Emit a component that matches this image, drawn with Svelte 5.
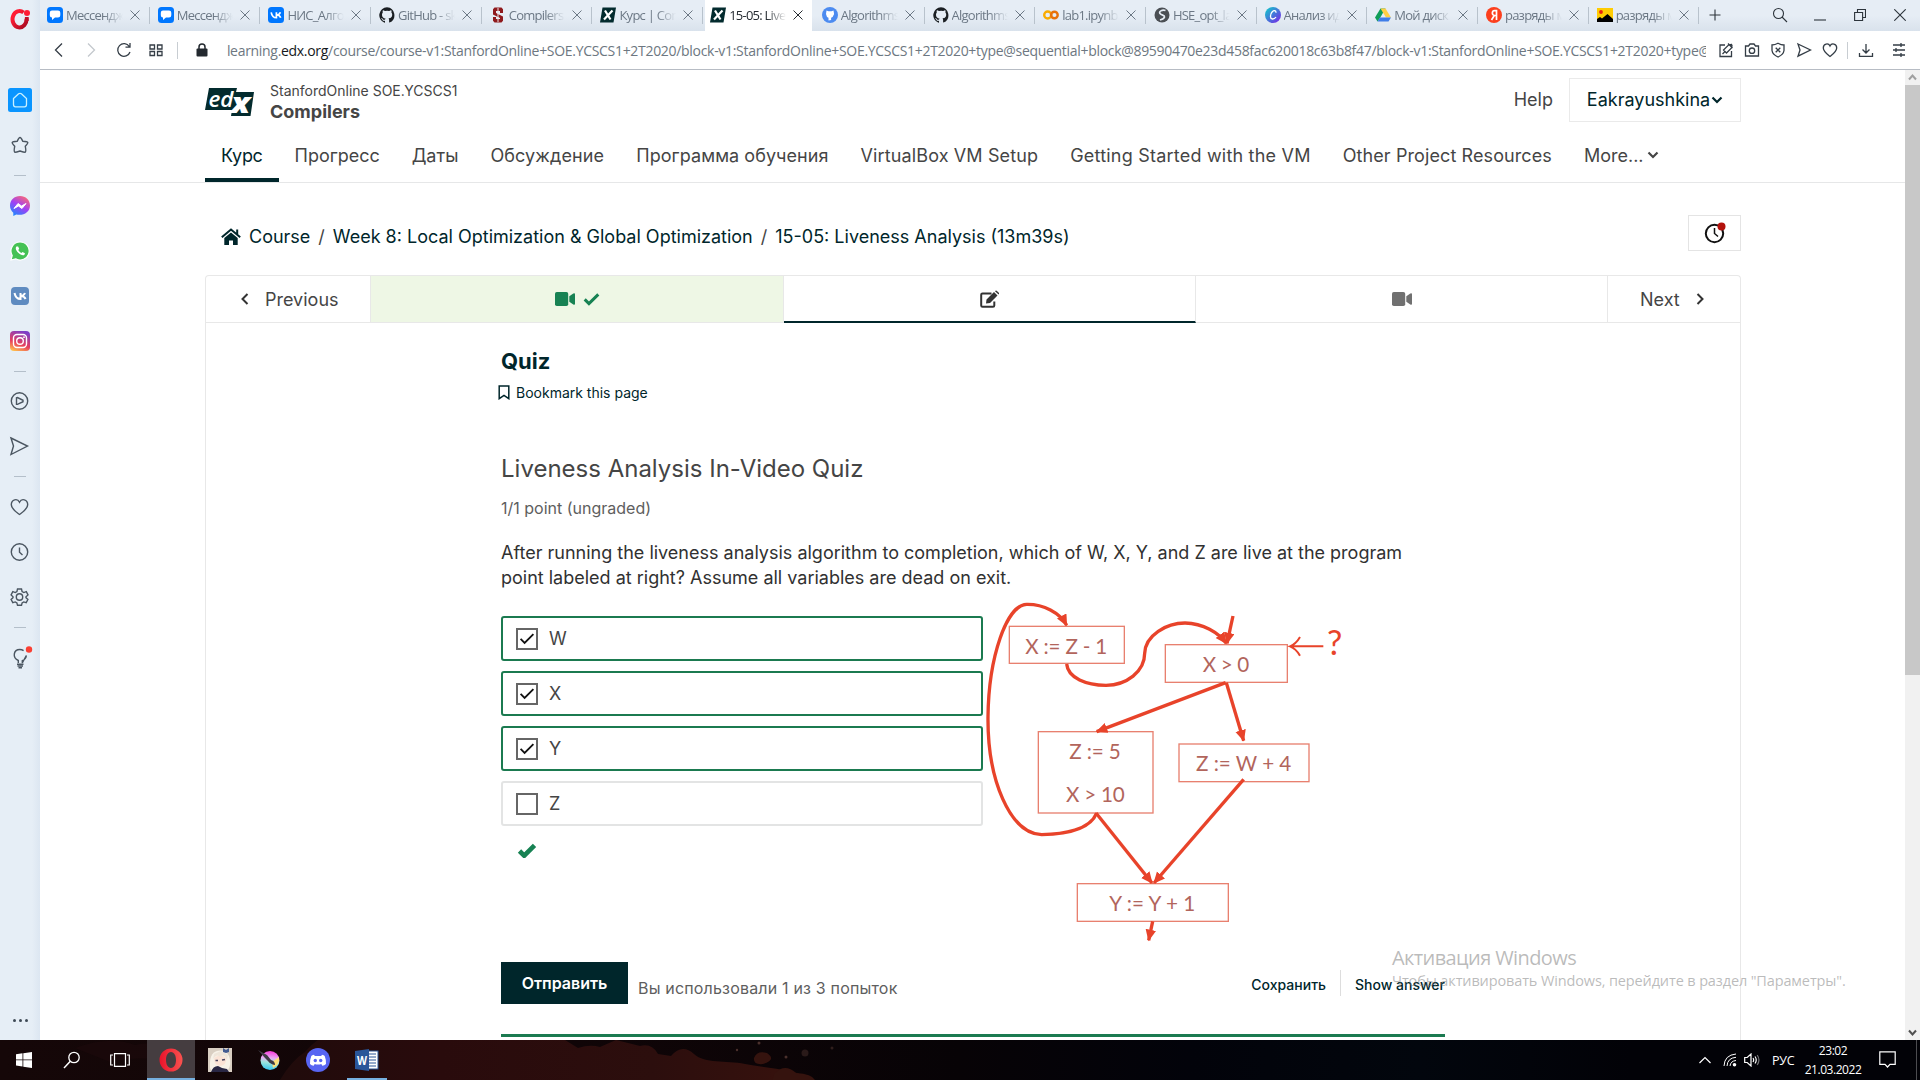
<script>
  const tabs = [
    { icon: 'chat', label: 'Мессенджер' },
    { icon: 'chat', label: 'Мессенджер' },
    { icon: 'vk', label: 'НИС_Алгоритмы' },
    { icon: 'github', label: 'GitHub - skr' },
    { icon: 'stanford', label: 'Compilers |' },
    { icon: 'edx', label: 'Курс | Compilers' },
    { icon: 'edx', label: '15-05: Liveness', active: true },
    { icon: 'bluegit', label: 'Algorithms' },
    { icon: 'github', label: 'Algorithms' },
    { icon: 'colab', label: 'lab1.ipynb -' },
    { icon: 'globe', label: 'HSE_opt_labs' },
    { icon: 'canva', label: 'Анализ идей' },
    { icon: 'drive', label: 'Мой диск –' },
    { icon: 'yandex', label: 'разряды мо' },
    { icon: 'picture', label: 'разряды мо' }
  ];
  const side = ['home', 'star', '-', 'messenger', 'whatsapp', 'vkside', 'instagram', '-', 'player', 'send', '-', 'heart', 'clock', 'gear', '-', 'bulb'];
  const nav = [
    { label: 'Курс', track: -0.3 },
    { label: 'Прогресс', track: -0.05 },
    { label: 'Даты', track: 0 },
    { label: 'Обсуждение', track: 0.12 },
    { label: 'Программа обучения', track: 0.06 },
    { label: 'VirtualBox VM Setup', track: 0.13 },
    { label: 'Getting Started with the VM', track: 0.21 },
    { label: 'Other Project Resources', track: 0.1 }
  ];
  let options = $state([
    { label: 'W', checked: true },
    { label: 'X', checked: true },
    { label: 'Y', checked: true },
    { label: 'Z', checked: false }
  ]);
</script>

{#snippet tabIcon(name)}
  <svg class="fav" viewBox="0 0 16 16">
    {#if name === 'chat'}
      <rect width="16" height="16" rx="3.5" fill="#07f" />
      <path d="M5 3.5h6a2.3 2.3 0 0 1 2.3 2.3v2.4A2.3 2.3 0 0 1 11 10.5H8l-3 2.4v-2.4A2.3 2.3 0 0 1 2.8 8.200V5.800A2.300 2.300 0 0 1 5 3.500z" fill="#fff" />
    {:else if name === 'vk'}
      <rect width="16" height="16" rx="3.500" fill="#07f" />
      <path d="M3.200 5.300C3.800 9 5.500 10.700 8.400 10.700V5.300M8.400 8C10.500 8 11.800 6.800 12.400 5.300M8.600 8C10.800 8 12.100 9.200 12.700 10.700" stroke="#fff" stroke-width="1.700" fill="none" />
    {:else if name === 'github'}
      <path d="M8 .2a8 8 0 0 0-2.500 15.500c.4.1.5-.2.5-.4v-1.500c-2.200.5-2.700-1-2.700-1-.4-.9-.9-1.200-.9-1.200-.7-.5.1-.5.1-.5.800.1 1.200.8 1.200.8.700 1.300 1.900.9 2.400.7.100-.5.300-.9.500-1.100-1.800-.2-3.600-.9-3.600-4 0-.9.300-1.600.8-2.100-.1-.2-.4-1 .1-2.100 0 0 .7-.2 2.200.8a7.500 7.500 0 0 1 4 0c1.500-1 2.200-.8 2.200-.8.400 1.100.2 1.900.1 2.100.5.600.8 1.300.8 2.100 0 3.100-1.900 3.700-3.700 3.900.300.300.6.800.6 1.500v2.200c0 .2.100.5.500.4A8 8 0 0 0 8 .2z" fill="#1b1f23" />
    {:else if name === 'stanford'}
      <path d="M4.500.5h7L13 2.300V6h-3V4H6v2l7 3.500v4.200l-1.500 1.800h-7L3 13.700V10h3v2h4v-1L3 7.500V2.300z" fill="#8f1a1d" />
      <path d="M8 1v14" stroke="#efe4e6" stroke-width="1" />
    {:else if name === 'edx'}
      <path d="M2.500.500H16L13.500 15.500H0z" fill="#032b2e" />
      <path d="M5 3.500l5.500 9M12.500 3.500L4 12.500" stroke="#fff" stroke-width="2.200" />
    {:else if name === 'bluegit'}
      <circle cx="8" cy="8" r="8" fill="#4c8bf0" />
      <path d="M4.500 3.500l2 .8h3l2-.8.600 3.500-1.500 3-1.500.7V13l-2.600.4V10.700l-1.500-.8L4 7z" fill="#fff" />
    {:else if name === 'colab'}
      <circle cx="4.700" cy="8" r="3.500" fill="none" stroke="#f9ab00" stroke-width="2.400" />
      <circle cx="11.400" cy="8" r="3.300" fill="none" stroke="#e8710a" stroke-width="2.400" />
    {:else if name === 'globe'}
      <circle cx="8" cy="8" r="7.500" fill="#4b4f54" />
      <path d="M11.500 3.500C8 2.500 4.500 4.500 6 6.500S11 8 10.500 10 7.500 12.500 6 13" fill="none" stroke="#e6edf5" stroke-width="1.700" />
    {:else if name === 'canva'}
      <defs><linearGradient id="cv" x1="0" y1="0" x2="1" y2="1"><stop offset=".1" stop-color="#15c0cc" /><stop offset=".9" stop-color="#7230e6" /></linearGradient></defs>
      <circle cx="8" cy="8" r="8" fill="url(#cv)" />
      <path d="M11 5.800C11.200 3.500 9 3 7.300 4.700 5 7 4.700 11.700 7.300 12c1.800.2 3-1 3.700-2" fill="none" stroke="#fff" stroke-width="1.300" />
    {:else if name === 'drive'}
      <path d="M5.500 1.500h5L5 11l-2.500 3.500L0 10.500z" fill="#0f9d58" />
      <path d="M5.500 1.500h5l5.500 9h-5z" fill="#ffcf44" />
      <path d="M5 10.500h11l-2.500 4h-11z" fill="#3f7de8" />
    {:else if name === 'yandex'}
      <circle cx="8" cy="8" r="8" fill="#fc3f1d" />
      <path d="M10.500 13V3.700H8.500C6 3.700 5.300 7.800 8.500 8.500h2M8.300 8.500L5.500 13" fill="none" stroke="#fff" stroke-width="1.700" />
    {:else}
      <rect y="1" width="16" height="14" fill="#ffcc02" />
      <path d="M0 15v-3l3-2 2 1.500L10.500 7l5.500 5v3z" fill="#000" />
      <circle cx="4" cy="5" r="1.900" fill="#e8220f" />
    {/if}
  </svg>
{/snippet}

{#snippet sideIcon(name)}
  <svg class="side-icon" viewBox="0 0 24 24">
    {#if name === 'home'}
      <rect width="24" height="24" rx="2.500" fill="#0a95ff" />
      <path d="M5.500 10.500L10.600 5.800Q12 4.800 13.400 5.800L18.500 10.500V16.500Q18.500 18.800 16.500 18.800H7.500Q5.500 18.800 5.500 16.500z" fill="none" stroke="#c9f1ff" stroke-width="1.300" />
    {:else if name === 'star'}
      <path d="M12 4.500Q13 4.500 14.800 8.300 19.300 8.600 19.800 9.500 20 10.300 17.300 13.300 18.300 18.500 17.200 19.200 16.400 19.400 12 18 7.600 19.400 6.800 19.200 5.700 18.500 6.700 13.300 4 10.300 4.200 9.500 4.700 8.600 9.200 8.300 11 4.500 12 4.500z" class="ln" />
    {:else if name === 'messenger'}
      <defs><linearGradient id="ms" x1=".2" y1="1" x2=".8" y2="0"><stop stop-color="#1a8cff" /><stop offset=".5" stop-color="#a040f5" /><stop offset="1" stop-color="#ff6b70" /></linearGradient></defs>
      <path d="M12 2C6.300 2 2 6 2 11.500c0 3 1.200 5.500 3.300 7.200V22l3-1.600c6.500 1.800 13.700-2 13.700-8.900C22 6 17.700 2 12 2z" fill="url(#ms)" />
      <path d="M6 14.500l4-5 3.500 2.500 4.500-2.500-4 5-3.500-2.500z" fill="#fff" stroke="#fff" />
    {:else if name === 'whatsapp'}
      <path d="M12 3a9 9 0 0 0-7.800 13.500L3 21l4.700-1.200A9 9 0 1 0 12 3z" fill="#45c254" stroke="#fff" stroke-width="1.200" />
      <path d="M8.500 7.500c-3 3 4 10 7.800 8.500l.7-1.800-2.500-1.200-1 1c-1.300-.5-2.600-1.800-3.200-3.100l.9-1.100L10.100 7.500z" fill="#fff" />
    {:else if name === 'vkside'}
      <rect x="3" y="3" width="18" height="18" rx="4" fill="#5f8bc0" />
      <path d="M6.500 9c.8 4 2.700 6 6 6V9M12.500 12c2.200 0 3.800-1.200 4.500-3M12.600 12c2.500 0 4.200 1.200 5 3" stroke="#fff" stroke-width="2" fill="none" />
    {:else if name === 'instagram'}
      <defs><linearGradient id="ig" x1=".2" y1="1" x2=".6" y2="0"><stop stop-color="#ffc14e" /><stop offset=".4" stop-color="#e8405c" /><stop offset="1" stop-color="#7d3fc8" /></linearGradient></defs>
      <rect x="2" y="2" width="20" height="20" rx="4" fill="url(#ig)" />
      <rect x="5.500" y="5.500" width="13" height="13" rx="3.500" fill="none" stroke="#fff" stroke-width="1.400" />
      <circle cx="12" cy="12" r="3.300" fill="none" stroke="#fff" stroke-width="1.400" /><circle cx="16" cy="8.200" r=".9" fill="#fff" />
    {:else if name === 'player'}
      <circle cx="11.500" cy="12" r="8.200" class="ln" /><path d="M8.500 8.800v6.500l1 .1 5.500-2.700v-1.400L9.500 8.600z" class="ln" />
    {:else if name === 'send'}
      <path d="M3 4l16.500 8L3 20.500 5.500 12z" class="ln" />
    {:else if name === 'heart'}
      <path d="M11.500 7.200C9.500 3 3.300 4.200 3.300 9.700c0 4.300 5 7.500 8.200 9.800 3.200-2.300 8.200-5.500 8.200-9.800 0-5.500-6.200-6.700-8.200-2.500z" class="ln" />
    {:else if name === 'clock'}
      <circle cx="11.500" cy="12" r="8.200" class="ln" /><path d="M11.500 7.500v4.800l3 2.700" class="ln" />
    {:else if name === 'gear'}
      <circle cx="11.500" cy="12" r="3.200" class="ln" />
      <path d="M9.500 4h4l.6 2.600 1.700 1 2.500-.9 1.700 3.200L18 11.800v.9l1.900 1.800-1.700 3.200-2.500-.8-1.600 1L13.500 20.300h-4l-.6-2.400-1.600-1-2.500.8L3.100 14.500 5 12.700v-.9L3.100 9.900l1.700-3.200 2.500.9 1.600-1z" class="ln" />
    {:else}
      <path d="M10.300 17v-2.500C4 11.500 5.500 3.500 11.800 3.500c1.500 0 2.500.3 3.800 1.200M18.300 9.500c0 2.500-1.500 4-4 5.200V17z" class="ln" />
      <path d="M9 18.200h6.500M9.500 20h5.500M10.500 21.800h3.500" class="ln" /><circle cx="21" cy="3.500" r="3.200" fill="#fa3f33" />
    {/if}
  </svg>
{/snippet}

{#snippet check(cls)}
  <svg class={cls} viewBox="0 0 20 16"><path d="M2 8.500l5 5L18 2.500" fill="none" stroke="currentColor" /></svg>
{/snippet}

{#snippet video()}
  <svg class="video" viewBox="0 0 20 14"><rect width="13.200" height="14" rx="1.800" fill="currentColor" /><path d="M14.300 4.300L18.300 1.500Q20 .8 20 2.300V11.700Q20 13.200 18.300 12.500L14.300 9.700z" fill="currentColor" /></svg>
{/snippet}

<div class="desktop">
  <div class="browser">
    <aside>
      <div class="opera-small">
        <svg width="24" height="24" viewBox="0 0 24 24"><defs><linearGradient id="op" x1="0" y1="0" x2="1" y2="1"><stop offset=".2" stop-color="#ff1d35" /><stop offset="1" stop-color="#a50a20" /></linearGradient></defs><path d="M15.500 4.500A7 8.200 0 1 0 18.500 10.500" fill="none" stroke="url(#op)" stroke-width="4" /><path d="M18.800 9v4" stroke="#c20f28" stroke-width="3.800" /><circle cx="19" cy="5" r="3" fill="#ff1d35" /></svg>
      </div>
      {#each side as item}
        {#if item === '-'}<div class="dash"><i></i></div>{:else}<div class="side-cell">{@render sideIcon(item)}</div>{/if}
      {/each}
      <div class="dots"><i></i><i></i><i></i></div>
    </aside>

    <div class="window">
      <div class="tabbar">
        {#each tabs as tab}
          <div class="tab" class:active={tab.active}>
            {@render tabIcon(tab.icon)}
            <span>{tab.label}</span>
            <svg class="x" viewBox="0 0 10 10"><path d="M.5.5l9 9M9.500.500l-9 9" /></svg>
          </div>
        {/each}
        <div class="controls">
          <svg class="plus" viewBox="0 0 12 12"><path d="M6 .5v11M.5 6h11" /></svg>
          <svg class="search" viewBox="0 0 16 16"><circle cx="6.500" cy="6.500" r="5" /><path d="M10 10l5 5" /></svg>
          <svg class="min" viewBox="0 0 12 12"><path d="M0 11h12" /></svg>
          <svg class="restore" viewBox="0 0 12 12"><path d="M.6 3.500h8v8h-8zM3.500 3.500v-3h8v8h-3" /></svg>
          <svg class="close" viewBox="0 0 12 12"><path d="M.3.300l11.400 11.400M11.700.300L.3 11.700" /></svg>
        </div>
      </div>

      <div class="address">
        <div class="nav-btns">
          <svg viewBox="0 0 16 16"><path d="M11 1.500L4.500 8l6.500 6.500" /></svg>
          <svg class="off" viewBox="0 0 16 16"><path d="M5 1.500L11.500 8 5 14.500" /></svg>
          <svg viewBox="0 0 16 16"><path d="M13.300 4.500A6.300 6.300 0 1 0 14 10M14 1v4.200h-4.500" /></svg>
          <svg viewBox="0 0 16 16"><path d="M2 3h4.500v4H2zM9.500 3H14v4H9.500zM2 9.500h4.500v4H2zM9.500 9.500H14v4H9.500z" /></svg>
        </div>
        <i class="vsep"></i>
        <svg class="lock" viewBox="0 0 12 14"><rect x=".5" y="5.500" width="11" height="8" rx="1" fill="#23292f" /><path d="M3 6V4a3 3 0 0 1 6 0v2" fill="none" stroke="#23292f" stroke-width="1.500" /></svg>
        <div class="url">learning.<b>edx.org</b>/course/course-v1:StanfordOnline+SOE.YCSCS1+2T2020/block-v1:StanfordOnline+SOE.YCSCS1+2T2020+type@sequential+block@89590470e23d458fac620018c63b8f47/block-v1:StanfordOnline+SOE.YCSCS1+2T2020+type@vertical</div>
        <div class="addr-icons">
          <svg viewBox="0 0 16 16"><path d="M7 3H2v11.500h11.500V9M13.500 2.500l-3 .5-5 5 3 3 5-5 .5-2.500zM10 1.500l4.500 4.500M4.500 12l2.500-2.500" /></svg>
          <svg viewBox="0 0 16 16"><path d="M1.500 4H4.500l1.500-2h4l1.500 2h3v10h-13z" /><circle cx="8" cy="8.700" r="2.700" /></svg>
          <svg viewBox="0 0 16 16"><path d="M8 1.300Q11 3 14 3V8.500Q13.500 12.500 8 15 2.500 12.500 2 8.500V3Q5 3 8 1.300zM5.700 5.700l4.600 4.600M10.300 5.700l-4.600 4.600" /></svg>
          <svg viewBox="0 0 16 16"><path d="M2 2l12.500 6L2 14.200 4 8z" /></svg>
          <svg viewBox="0 0 16 16"><path d="M8 4C6.500.7 1.300 1.500 1.300 6c0 3.500 4.200 6.500 6.700 8.500 2.500-2 6.700-5 6.700-8.500C14.700 1.500 9.500.7 8 4z" /></svg>
          <i class="vsep"></i>
          <svg class="dl" viewBox="0 0 16 16"><path d="M8 2v8.500M4.500 7.500L8 11l3.500-3.500M1.500 11v3.300h13V11" /></svg>
          <svg class="menu" viewBox="0 0 16 16"><path d="M2 3h12M2 8h12M2 13h12M10 1v4M5 6v4M10 11v4" /></svg>
        </div>
      </div>

      <div class="viewport">
        <div class="page">
          <header>
            <div class="brand-row">
              <svg class="logo" viewBox="0 0 49 28">
                <path d="M4 0H32L31 4H49L45.500 28H26L27 22H0z" fill="#032b2e" />
                <text x="3.500" y="18.500" class="lg" textLength="25" lengthAdjust="spacingAndGlyphs">ed</text>
                <text x="26" y="25" class="lg big" textLength="19" lengthAdjust="spacingAndGlyphs">x</text>
              </svg>
              <div class="course"><div class="org">StanfordOnline SOE.YCSCS1</div><div class="name">Compilers</div></div>
              <a class="help">Help</a>
              <button class="user">Eakrayushkina<svg class="caret" viewBox="0 0 12 8"><path d="M1.500 1.500L6 6l4.500-4.500" /></svg></button>
            </div>
            <nav>
              {#each nav as item, i}<a class:current={i === 0} style:letter-spacing="{item.track}px">{item.label}</a>{/each}
              <a class="more">More...<svg class="caret" viewBox="0 0 12 8"><path d="M1.500 1.500L6 6l4.500-4.500" /></svg></a>
            </nav>
          </header>

          <div class="crumb-row">
            <svg class="house" viewBox="0 0 20 17"><path d="M.8 9.300L10 1.500l9.200 7.800M16.200 1.500v5" fill="none" stroke="#00262b" stroke-width="2" /><path d="M3.300 10L10 4.500 16.700 10v7h-4.700v-4.500H8V17H3.300z" fill="#00262b" /></svg>
            <a>Course</a><span>/</span><a class="week">Week 8: Local Optimization &amp; Global Optimization</a><span>/</span><a>15-05: Liveness Analysis (13m39s)</a>
            <button class="timer"><svg width="26" height="26" viewBox="0 0 26 26"><circle cx="12.500" cy="13.500" r="8.700" fill="none" stroke="#111" stroke-width="2" /><path d="M12.500 8v5.500l3.500 3" fill="none" stroke="#111" stroke-width="1.500" /><circle cx="19.500" cy="6.500" r="4" fill="#b3120c" /></svg></button>
          </div>

          <main>
            <div class="sequence">
              <div class="prev"><svg class="chev" viewBox="0 0 8 12"><path d="M6.500 1L1.500 6l5 5" /></svg>Previous</div>
              <div class="unit done">{@render video()}{@render check('tick')}</div>
              <div class="unit here"><svg class="edit" viewBox="0 0 20 18"><path d="M11.500 3.500H2.500A1.300 1.300 0 0 0 1.200 4.800V15.500A1.300 1.300 0 0 0 2.500 16.800H13A1.300 1.300 0 0 0 14.300 15.500V11.500" fill="none" stroke="#333" stroke-width="2" /><path d="M6.500 9.500L14 2l3.500 3.500L10 13l-4 .5zM15 1.200Q16 0 17.200 1.200L18.800 2.800Q19.600 3.700 18.600 4.600z" fill="#333" /></svg></div>
              <div class="unit">{@render video()}</div>
              <div class="next">Next<svg class="chev" viewBox="0 0 8 12"><path d="M1.500 1l5 5-5 5" /></svg></div>
            </div>

            <article>
              <h1>Quiz</h1>
              <div class="bookmark"><svg viewBox="0 0 12 15"><path d="M1.200 1h9.600v12.700L6 10.500l-4.800 3.200z" fill="none" stroke="#00262b" stroke-width="1.500" /></svg>Bookmark this page</div>
              <h2>Liveness Analysis In-Video Quiz</h2>
              <div class="points">1/1 point (ungraded)</div>
              <p>After running the liveness analysis algorithm to completion, which of W, X, Y, and Z are live at the program point labeled at right? Assume all variables are dead on exit.</p>
              <div class="problem">
                <div class="options">
                  {#each options as o}
                    <button class="option" class:correct={o.checked} onclick={() => (o.checked = !o.checked)}>
                      <i class="box">{#if o.checked}{@render check('mark')}{/if}</i>{o.label}
                    </button>
                  {/each}
                  {@render check('result')}
                </div>
                <svg class="graph" viewBox="15 60 1080 1035">
                  <defs><marker id="tip" markerUnits="userSpaceOnUse" markerWidth="40" markerHeight="36" refX="32" refY="16" orient="auto"><path d="M0 0L35 16 0 32z" fill="#e8432a" /></marker></defs>
                  <g class="nodes">
                    <rect x="88" y="139" width="345" height="111" /><rect x="556" y="194" width="366" height="113" />
                    <rect x="175" y="455" width="344" height="244" /><rect x="597" y="492" width="390" height="113" /><rect x="292" y="911" width="453" height="113" />
                  </g>
                  <g class="edges">
                    <path d="M350 699C330 750 250 763 185 764C90 760 22 600 24 410C26 230 80 75 140 73C190 72 240 98 260 136" />
                    <path d="M260 252C264 295 320 315 378 316C440 315 494 275 494 220C496 165 560 129 615 129C670 130 715 158 739 190" />
                    <path d="M759 108L741 190" /><path d="M737 308L350 455" /><path d="M739 308L791 482" />
                    <path d="M348 699L516 909" /><path d="M791 598L522 909" /><path d="M518 1024L506 1081" />
                  </g>
                  <path d="M1030 199H932M960 171Q948 192 930 199Q948 206 960 227" fill="none" stroke="#e8432a" stroke-width="6" />
                  <g class="labels">
                    <text x="136" y="221" textLength="246">X := Z - 1</text><text x="668" y="275" textLength="140">X &gt; 0</text>
                    <text x="268" y="538" textLength="154">Z := 5</text><text x="258" y="667" textLength="176">X &gt; 10</text>
                    <text x="648" y="574" textLength="286">Z := W + 4</text><text x="388" y="992" textLength="258">Y := Y + 1</text>
                    <text x="1041" y="225" class="q" textLength="46" lengthAdjust="spacingAndGlyphs">?</text>
                  </g>
                </svg>
              </div>
              <div class="actions">
                <button class="submit">Отправить</button>
                <span class="attempts">Вы использовали 1 из 3 попыток</span>
                <a class="save">Сохранить</a><i></i><a class="show">Show answer</a>
              </div>
              <div class="rule"></div>
            </article>
          </main>
        </div>
        <div class="scroll">
          <svg viewBox="0 0 15 15"><path d="M4 9.500L7.500 5.500 11 9.500" stroke="#a0a0a0" /></svg>
          <div class="thumb"></div>
          <svg viewBox="0 0 15 15"><path d="M4 5.500L7.500 9.500 11 5.500" stroke="#505050" /></svg>
        </div>
      </div>
    </div>
  </div>

  <footer>
    <svg class="wall" viewBox="0 0 1920 40" preserveAspectRatio="none">
      <defs>
        <linearGradient id="sky"><stop stop-color="#150708" /><stop offset=".3" stop-color="#100507" /><stop offset=".5" stop-color="#070306" /><stop offset=".62" stop-color="#02030a" /><stop offset=".74" stop-color="#02060d" /><stop offset=".85" stop-color="#020207" /></linearGradient>
        <linearGradient id="cloud"><stop stop-color="#200b0b" /><stop offset=".3" stop-color="#290b0c" /><stop offset=".7" stop-color="#2c0e0d" /><stop offset="1" stop-color="#38120d" /></linearGradient>
      </defs>
      <rect width="1920" height="40" fill="url(#sky)" />
      <path d="M280 40Q292 20 305 12 312 4 318 0H565L578 8Q590 4 600 7L616 0 640 6Q652 3 658 14L671 16Q682 3 694 14C705 24 725 20 745 24S798 29 813 40z" fill="url(#cloud)" />
      <path d="M754 18Q757 10 767 13 777 20 763 24 753 25 754 18zM775 33Q785 23 796 33 812 34 815 40H772z" fill="#35130e" />
      <path d="M75 8Q110-5 135 5 155 0 178 12L190 24Q140 14 110 22z" fill="#1d0a0b" opacity=".6" />
      <g fill="#4a302c"><circle cx="737" cy="10" r="1.200" /><circle cx="759" cy="3" r="1.500" /><circle cx="786" cy="17" r="1.500" /><circle cx="805" cy="13" r="3.500" opacity=".5" /><circle cx="832" cy="8" r="1.500" opacity=".6" /></g>
    </svg>
    <div class="apps">
      <div class="app"><svg width="16" height="16" viewBox="0 0 16 16"><path d="M0 2.200L6.500 1.300v6.200H0zM7.300 1.200L16 0v7.500H7.300zM0 8.300h6.500v6.200L0 13.600zM7.300 8.300H16V16l-8.700-1.200z" fill="#fff" /></svg></div>
      <div class="app"><svg width="18" height="18" viewBox="0 0 18 18"><circle cx="11" cy="6.500" r="5.200" fill="none" stroke="#fff" stroke-width="1.300" /><path d="M7.300 10.300L1 17" stroke="#fff" stroke-width="1.500" /></svg></div>
      <div class="app"><svg width="20" height="14" viewBox="0 0 20 14"><path d="M4.500.7h11v12.600h-11zM3 2H.7v10H3M17 2h2.300v10H17" fill="none" stroke="#fff" stroke-width="1.200" /></svg></div>
      <div class="app focus"><svg width="24" height="24" viewBox="0 0 24 24"><defs><linearGradient id="ob" x1="0" x2="1"><stop stop-color="#e8132b" /><stop offset="1" stop-color="#f9524f" /></linearGradient></defs><path fill-rule="evenodd" d="M12 .5a11.500 11.500 0 1 0 0 23 11.500 11.500 0 1 0 0-23zM12 4c3.300 0 5 3.800 5 8s-1.700 8-5 8-5-3.800-5-8 1.700-8 5-8z" fill="url(#ob)" /></svg></div>
      <div class="app wide"><svg width="24" height="24" viewBox="0 0 24 24"><rect width="24" height="24" fill="#d9cfc2" /><path d="M2 20Q1 5 9 3T21 8Q24 16 20 22L4 24z" fill="#f7f2e8" /><path d="M6 10Q12 5 18 10Q19 17 12 18 6 17 6 10z" fill="#fbe3d6" /><path d="M5 11Q9 5 12 9 16 5 19 12L20 7 13 3 6 6z" fill="#eee5d9" /><path d="M7.500 12.500h2.500M14 12l3-.5" stroke="#4a4762" stroke-width="1.500" /><path d="M15 0l3 2 3-2v4l-3 1-3-1z" fill="#435c91" /><path d="M3 24Q5 18 10 18l4 2 5 1 2 3z" fill="#292744" /></svg></div>
      <div class="app wide"><svg width="22" height="22" viewBox="0 0 22 22"><defs><linearGradient id="kr" x1=".5" y1="0" x2=".4" y2="1"><stop stop-color="#f63bdc" /><stop offset=".35" stop-color="#e9a7f5" /><stop offset=".6" stop-color="#9ee6dc" /><stop offset="1" stop-color="#34c7f0" /></linearGradient></defs><circle cx="12" cy="11.500" r="9.500" fill="url(#kr)" /><path d="M14 13l7-5q1 8-6 11z" fill="#fbe07a" /><path d="M0 1l9 5 4 5q4 1 4 5-5-1-7-4L7 9z" fill="#3d3b44" /></svg></div>
      <div class="app wide"><svg width="24" height="24" viewBox="0 0 24 24"><circle cx="12" cy="12" r="12" fill="#5865f2" /><path d="M8 6.800q-2 .4-2.700 1.200Q3.700 12 4 16q1.500 1.500 3.700 1.700l1-1.700q3.300 1 6.600 0l1 1.700Q18.500 17.500 20 16q.3-4-1.300-8Q18 7.200 16 6.800l-.8 1.200H8.800z" fill="#fff" /><circle cx="9.300" cy="12.500" r="1.700" fill="#5865f2" /><circle cx="14.700" cy="12.500" r="1.700" fill="#5865f2" /></svg></div>
      <div class="app open"><svg width="24" height="22" viewBox="0 0 24 22"><rect x="12" y="2" width="11" height="18" fill="#fff" stroke="#2a5699" /><path d="M14 5h7M14 8h7M14 11h7M14 14h7M14 17h7" stroke="#2a5699" stroke-width="1.200" /><path d="M0 2L14 0v22L0 20z" fill="#2a5699" /><text x="2" y="15.500" class="word" textLength="10" lengthAdjust="spacingAndGlyphs">W</text></svg></div>
    </div>
    <div class="tray">
      <svg width="14" height="8" viewBox="0 0 14 8"><path d="M1.500 7L7 1.500 12.500 7" /></svg>
      <svg class="wifi" width="14" height="14" viewBox="0 0 14 14"><path d="M1 13Q1.500 2 13 1M4 13Q4.500 5 13 4.300M7 13Q7.500 8 13 7.500" stroke-width="1" /><circle cx="11.500" cy="11.800" r="1.800" fill="#fff" stroke="none" /></svg>
      <svg class="vol" width="17" height="14" viewBox="0 0 17 14"><path d="M.7 4.500h2.500L7 1v12L3.200 9.500H.7zM9 5q1.300 2 0 4M11 3.500q2.500 3.500 0 7" /><path d="M13.200 2q3.500 5 0 10" opacity=".45" /></svg>
      <span class="lang">РУС</span>
      <div class="time"><span>23:02</span><span>21.03.2022</span></div>
      <svg class="note" width="17" height="18" viewBox="0 0 17 18"><path d="M.8.800h15.400v12.500H11L8.500 16 6 13.300H.8z" /></svg>
      <i></i>
    </div>
  </footer>

  <div class="watermark"><div class="big">Активация Windows</div><div>Чтобы активировать Windows, перейдите в раздел "Параметры".</div></div>
</div>

<style>
  :global(body) { margin: 0; overflow: hidden; }
  .desktop { position: relative; width: 1920px; height: 1080px; display: flex; flex-direction: column; font-family: Inter, sans-serif; color: #454545; background: #fff; overflow: hidden; }
  .desktop * { box-sizing: border-box; }
  svg { display: block; flex: none; }
  button { font: inherit; color: inherit; background: none; border: 0; padding: 0; margin: 0; border-radius: 0; }
  .browser { display: flex; height: 1040px; }

  aside { width: 40px; background: linear-gradient(90deg, #e6eef6 80%, #dce6f1); display: flex; flex-direction: column; align-items: center; }
  .opera-small { height: 77.500px; padding-top: 8px; }
  .side-cell { height: 45px; display: flex; align-items: center; }
  .side-icon { width: 24px; height: 24px; overflow: visible; }
  .ln { fill: none; stroke: #4b5661; stroke-width: 1.400; }
  .dash { height: 15.700px; display: flex; align-items: center; }
  .dash i { width: 12px; height: 1px; background: #b4bfca; }
  .dots { margin-top: auto; height: 40px; display: flex; align-items: center; gap: 3px; }
  .dots i { width: 3px; height: 3px; border-radius: 50%; background: #3e4a55; }

  .window { width: 1880px; display: flex; flex-direction: column; }
  .tabbar { height: 31px; display: flex; background: linear-gradient(#e6edf5 50%, #d9e2ec); }
  .tab { width: 110.700px; height: 31px; display: flex; align-items: center; padding: 0 10px 1px 7px; color: #6c7885; font: 13px "Open Sans", sans-serif; border-right: 1px solid transparent; background: linear-gradient(#b8c2cc, #b8c2cc) right 7px / 1px 17px no-repeat; }
  .tab.active { background: #fff; color: #252b31; margin: 0 3px 0 1px; width: 106.700px; padding-left: 5px; padding-right: 8px; }
  .fav { width: 16px; height: 16px; margin-right: 3px; }
  .tab span { flex: 1; overflow: hidden; white-space: nowrap; letter-spacing: -.75px; margin-right: 7px; -webkit-mask-image: linear-gradient(90deg, #000 66%, transparent); mask-image: linear-gradient(90deg, #000 66%, transparent); }
  .x { width: 10px; height: 10px; stroke: #6c7885; stroke-width: 1; }
  .active .x { stroke: #252b31; }
  .controls { flex: 1; display: flex; align-items: center; padding: 0 0 2px 8.500px; stroke: #2c343b; stroke-width: 1.100; fill: none; }
  .controls svg { width: 12px; height: 12px; }
  .controls .plus { margin-right: 51px; }
  .controls .search { width: 16px; height: 16px; margin-right: 26px; }
  .controls .min { margin: 0 28px 0 0; }
  .controls .restore { margin-right: 28px; }

  .address { height: 39px; border-bottom: 1px solid #b7bcc4; display: flex; align-items: center; background: #fff; }
  .address svg { width: 16px; height: 16px; fill: none; stroke: #343d46; stroke-width: 1.300; }
  .nav-btns { display: flex; gap: 16.300px; padding: 0 13px 0 11px; }
  .address .off { stroke: #c3c8cd; }
  .vsep { width: 1px; height: 17px; background: #c8cdd2; flex: none; }
  .address .lock { width: 12px; height: 14px; stroke: none; margin: 0 19px 0 18px; }
  .url { width: 1479px; overflow: hidden; white-space: nowrap; color: #6d7781; font: 14px "Open Sans", sans-serif; letter-spacing: -.305px; }
  .url b { color: #14181c; font-weight: 400; }
  .addr-icons { display: flex; align-items: center; gap: 10px; padding-left: 12px; }
  .addr-icons .vsep { margin: 0 0 0 -1px; }
  .addr-icons .menu { margin-left: 7px; }

  .viewport { display: flex; height: 970px; }
  .page { width: 1865px; }
  header { height: 113px; border-bottom: 1px solid #e6e7e8; padding-left: 165px; }
  .brand-row { display: flex; height: 60px; align-items: flex-start; width: 1536px; }
  .logo { width: 49px; height: 28px; margin-top: 18px; }
  .lg { fill: #fff; font: italic 600 21px "Open Sans", sans-serif; }
  .lg.big { font-size: 28px; font-weight: 800; }
  .course { margin: 12px auto 0 16px; }
  .org { font-size: 14px; line-height: 18px; }
  .name { font-size: 18px; font-weight: 700; line-height: 23px; }
  .help { font-size: 18px; line-height: 24px; margin: 18px 16px 0 0; }
  .user { width: 172px; height: 44px; margin-top: 8px; border: 1px solid #eaeaea; color: #00262b; font-size: 18px; display: flex; align-items: center; justify-content: center; padding-bottom: 1px; }
  .caret { width: 12px; height: 8px; margin-left: 1px; fill: none; stroke: currentColor; stroke-width: 2.200; display: inline-block; }
  nav { display: flex; height: 52px; font-size: 18px; }
  nav a { padding: 0 16px 2px; white-space: nowrap; display: flex; align-items: center; }
  nav .current { color: #00262b; box-shadow: inset 0 -4px #00262b; }
  nav .more { padding-right: 0; }
  .more .caret { margin-left: 3px; }

  .crumb-row { display: flex; align-items: center; height: 107px; width: 1701px; padding-left: 181px; font-size: 18px; color: #00262b; }
  .house { width: 20px; height: 17px; margin-right: 8px; }
  .crumb-row span { margin: 0 8px; color: #454545; }
  .timer { width: 53px; height: 36px; border: 1px solid #e4e4e4; margin: 0 0 7px auto; display: flex; align-items: center; justify-content: center; }
  main { width: 1536px; height: 765px; margin: -15px 0 0 165px; border: 1px solid #e8e8e8; border-bottom: 0; border-radius: 4px 4px 0 0; overflow: hidden; }
  .sequence { display: flex; height: 47px; font-size: 18px; }
  .sequence > div { display: flex; align-items: center; border-bottom: 1px solid #e8e8e8; border-right: 1px solid #e8e8e8; }
  .prev { width: 165px; padding-left: 35px; }
  .prev .chev { margin-right: 16px; }
  .chev { width: 8px; height: 12px; fill: none; stroke: #333; stroke-width: 2; }
  .unit { flex: 1; justify-content: center; gap: 8px; color: #707070; }
  .unit.done { background: #eef7e5; color: #178253; padding-left: 1px; }
  .sequence .here { border-bottom: 2px solid #00262b; }
  .sequence .next { width: 132px; border-right: 0; padding-left: 32px; }
  .next .chev { margin-left: 16px; }
  .video { width: 20px; height: 14px; }
  .tick { width: 17px; height: 14px; stroke-width: 3.500; }
  .edit { width: 20px; height: 18px; }

  article { padding: 24px 0 0 295px; width: 1239px; }
  h1 { margin: 0; font-size: 22px; line-height: 28px; font-weight: 700; color: #00262b; }
  .bookmark { display: flex; align-items: center; height: 20px; margin: 7px 0 0 -3px; gap: 6px; font-size: 14px; color: #00262b; }
  .bookmark svg { width: 12px; height: 15px; }
  h2 { margin: 51px 0 0; font-size: 24px; line-height: 32px; font-weight: 400; }
  .points { margin-top: 12px; font-size: 16px; line-height: 22px; color: #5e5e5e; }
  p { margin: 21px 0 0; font-size: 18px; line-height: 25px; color: #313131; width: 935px; }
  .problem { display: flex; height: 345px; margin-top: 10px; }
  .options { width: 482px; padding-top: 16px; display: flex; flex-direction: column; gap: 10px; margin-right: 2px; }
  .option { height: 45px; border: 2px solid #e3e4e4; border-radius: 3px; display: flex; align-items: center; padding-left: 13px; font-size: 18px; }
  .option.correct { border-color: #1b7a50; }
  .box { width: 22px; height: 22px; border: 2px solid #666; margin-right: 11px; display: flex; align-items: center; justify-content: center; }
  .mark { width: 16px; height: 13px; color: #111; stroke-width: 2.300; }
  .result { width: 20px; height: 15px; color: #178253; stroke-width: 5; margin: 7px 0 0 16px; }
  .graph { width: 360px; height: 345px; }
  .nodes rect { fill: none; stroke: #e8806f; stroke-width: 4; }
  .edges path { fill: none; stroke: #e8432a; stroke-width: 10; marker-end: url(#tip); }
  .labels text { font: 62px Lato, sans-serif; fill: #b2655c; }
  .labels .q { font-size: 105px; fill: #e8432a; }

  .actions { display: flex; align-items: center; height: 44px; margin-top: 16px; width: 944px; }
  .submit { width: 127px; height: 42px; background: #00262b; color: #fff; font-size: 16px; font-weight: 600; }
  .attempts { margin: 9px auto 0 10px; font-size: 16px; letter-spacing: .18px; color: #5e5e5e; }
  .save, .show { font-size: 14px; font-weight: 500; color: #00262b; padding-top: 2px; }
  .actions i { width: 1px; height: 26px; background: #ddd; margin: 0 14px; }
  .rule { height: 3px; margin-top: 29px; width: 944px; background: #1b7a50; }

  .scroll { width: 15px; background: #f1f1f1; display: flex; flex-direction: column; }
  .scroll svg { width: 15px; height: 15px; fill: none; stroke-width: 2; }
  .thumb { height: 590px; background: #c8c8c8; margin-bottom: auto; }

  footer { position: relative; height: 40px; display: flex; justify-content: space-between; background: #050306; }
  .wall { position: absolute; inset: 0; width: 1920px; height: 40px; }
  .apps, .tray { position: relative; display: flex; align-items: center; }
  .app { width: 48px; height: 40px; display: flex; align-items: center; justify-content: center; }
  .app.wide { width: 49px; }
  .focus { margin-left: 3px; background: #453d40; border-bottom: 2px solid #76b0df; padding-top: 2px; }
  .open { width: 40px; margin-left: 5px; border-bottom: 2px solid #76b0df; padding-top: 2px; }
  .word { fill: #fff; font: 700 13px "Open Sans", sans-serif; }
  .tray { color: #fff; font: 12.500px "Open Sans", sans-serif; letter-spacing: -.3px; }
  .tray svg { fill: none; stroke: #fff; stroke-width: 1.200; }
  .wifi { margin: 0 7px 0 11px; }
  .vol { margin-right: 11px; }
  .lang { width: 22px; }
  .time { width: 56px; margin: 0 18px 0 11px; display: flex; flex-direction: column; align-items: center; line-height: 19px; font-size: 12px; letter-spacing: -.45px; }
  .tray i { width: 1px; height: 40px; background: #4c4c50; margin: 0 3px 0 20px; }

  .watermark { position: absolute; left: 1392px; top: 944px; color: rgba(120, 120, 120, .5); font: 14.500px/20px "Open Sans", sans-serif; letter-spacing: -.13px; white-space: nowrap; }
  .watermark .big { font-size: 20px; line-height: 27px; letter-spacing: -.6px; }
</style>
